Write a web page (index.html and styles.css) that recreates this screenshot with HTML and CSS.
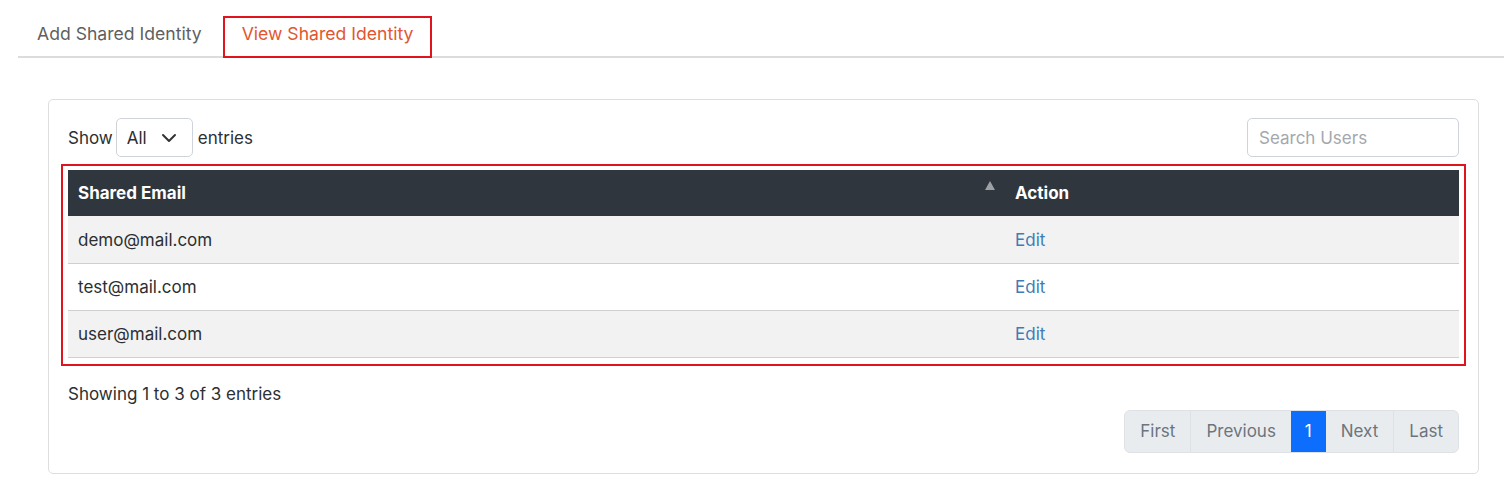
FILE: index.html
```html
<!DOCTYPE html>
<html>
<head>
<meta charset="utf-8">
<link rel="stylesheet" href="styles.css">
</head>
<body>
<div class="page">
  <div class="tabs">
    <div class="tab">Add Shared Identity</div>
    <div class="tab active">View Shared Identity</div>
  </div>
  <div class="card">
    <div class="toolbar">
      <div class="length">
        <span>Show</span>
        <div class="select"><span>All</span>
          <svg width="16" height="10" viewBox="0 0 16 10"><path d="M2 2l6 6 6-6" fill="none" stroke="#333" stroke-width="2" stroke-linecap="round" stroke-linejoin="round"/></svg>
        </div>
        <span>entries</span>
      </div>
      <div class="search">Search Users</div>
    </div>
    <div class="highlight">
      <table class="grid">
        <thead>
          <tr><th class="c1">Shared Email<span class="sort"></span></th><th class="c2">Action</th></tr>
        </thead>
        <tbody>
          <tr class="odd"><td>demo@mail.com</td><td><span class="link">Edit</span></td></tr>
          <tr><td>test@mail.com</td><td><span class="link">Edit</span></td></tr>
          <tr class="odd"><td>user@mail.com</td><td><span class="link">Edit</span></td></tr>
        </tbody>
      </table>
    </div>
    <div class="info">Showing 1 to 3 of 3 entries</div>
    <div class="pager-row">
      <div class="pager">
        <span class="pg first">First</span>
        <span class="pg">Previous</span>
        <span class="pg current">1</span>
        <span class="pg">Next</span>
        <span class="pg last">Last</span>
      </div>
    </div>
  </div>
</div>
</body>
</html>
```
FILE: styles.css
```css
* { box-sizing: border-box; }
html, body { margin: 0; padding: 0; background: #fff; }
body {
  font-family: Inter, "Noto Sans", sans-serif;
  font-size: 17px;
  color: #2b2f33;
}
.page { padding: 16px 0 0 18px; }
.tabs {
  display: flex;
  gap: 2px;
  border-bottom: 2px solid #dcdcdc;
  height: 42px;
}
.tab {
  border: 2px solid transparent;
  padding: 0 17px 7px 17px;
  height: 42px;
  display: flex;
  align-items: center;
  color: #5f5f5f;
  font-size: 17.6px;
  margin-bottom: -2px;
}
.tab.active {
  border-color: #e0141c;
  color: #e2562f;
}
.card {
  margin: 41px 0 0 30px;
  width: 1431px;
  border: 1px solid #dedede;
  border-radius: 5px;
  padding: 18px 19px 20px 19px;
}
.toolbar {
  display: flex;
  justify-content: space-between;
  align-items: center;
  height: 39px;
}
.length { display: flex; align-items: center; }
.select {
  width: 77px;
  height: 39px;
  border: 1px solid #ced4da;
  border-radius: 5px;
  display: flex;
  align-items: center;
  justify-content: space-between;
  padding: 0 15px 0 10px;
  margin: 0 5px 0 3px;
}
.search {
  width: 212px;
  height: 39px;
  border: 1px solid #ced4da;
  border-radius: 5px;
  padding: 0 11px;
  display: flex;
  align-items: center;
  color: #a4a8ad;
}
.highlight {
  margin: 7px -7px 0 -7px;
  border: 2px solid #e0141c;
  padding: 4px 5px 6px 5px;
}
.grid {
  width: 100%;
  border-collapse: collapse;
}
.grid th {
  background: #2f363d;
  color: #fff;
  font-weight: 700;
  text-align: left;
  height: 46px;
  padding: 0 10px;
  position: relative;
}
.grid th.c1 { width: 937px; }
.sort {
  position: absolute;
  right: 10px;
  top: 11px;
  width: 0; height: 0;
  border-left: 5px solid transparent;
  border-right: 5px solid transparent;
  border-bottom: 9px solid #9da1a5;
}
.grid td {
  height: 47px;
  padding: 1px 10px 0 10px;
  border-bottom: 1px solid #cfcfcf;
}
.grid tr.odd td { background: #f2f2f2; }
.link { color: #3f7cb6; }
.info { margin-top: 16px; line-height: 24px; }
.pager-row { display: flex; justify-content: flex-end; margin-top: 4px; }
.pager {
  display: flex;
  height: 43px;
  border: 1px solid #dee2e6;
  border-radius: 6px;
  background: #e9ecef;
  overflow: hidden;
}
.pg {
  display: flex;
  align-items: center;
  padding: 0 15px;
  color: #6c757d;
  border-left: 1px solid #dee2e6;
}
.pg.first { border-left: 0; }
.pg.current { background: #0d6efd; color: #fff; border-left: 0; padding: 0 14px; }
.pg.current + .pg { border-left: 0; }
```
